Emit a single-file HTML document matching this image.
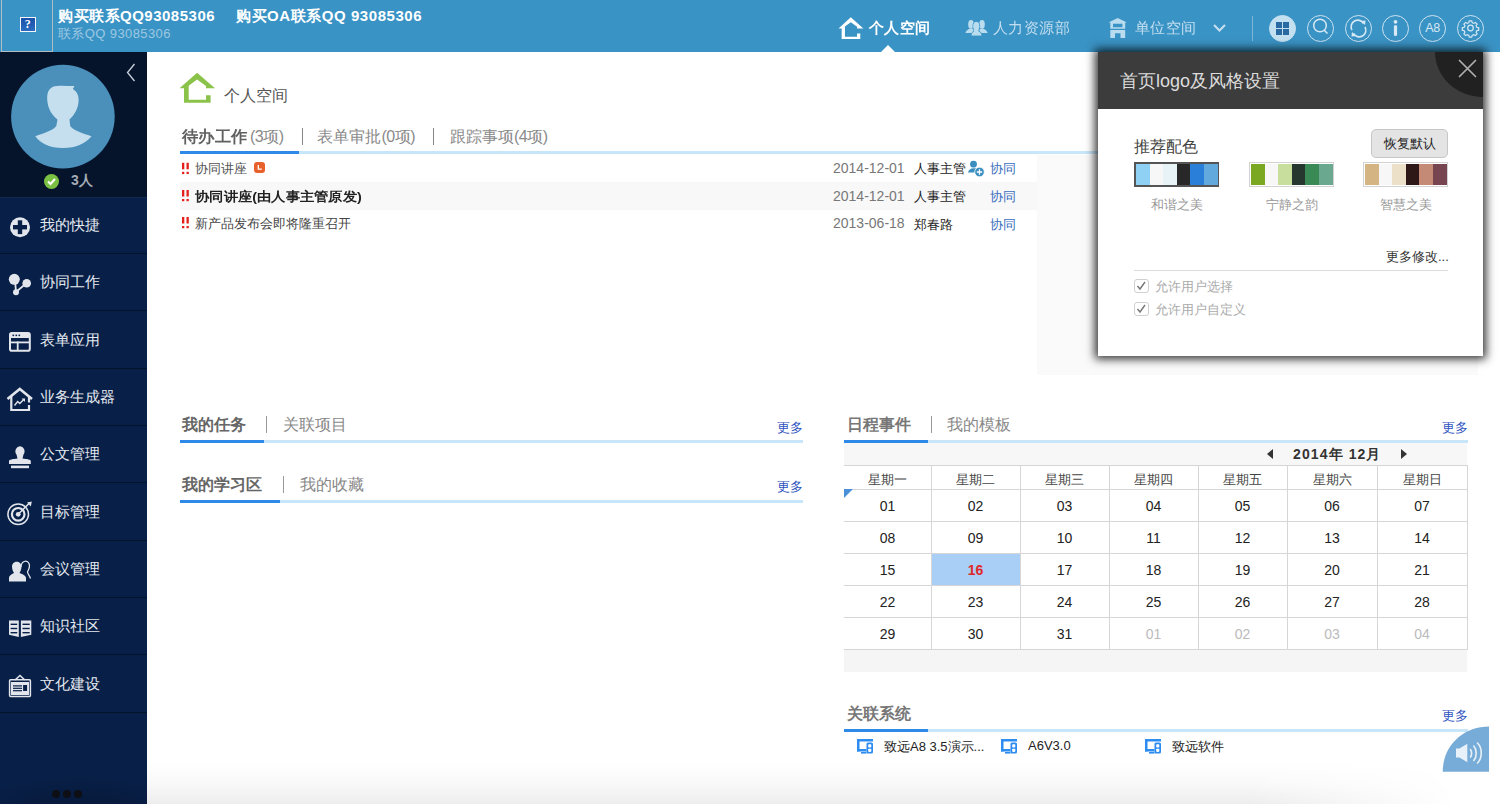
<!DOCTYPE html>
<html><head><meta charset="utf-8">
<style>
*{margin:0;padding:0;box-sizing:border-box}
html,body{width:1500px;height:804px;overflow:hidden;background:#fff;font-family:"Liberation Sans",sans-serif;position:relative}
.a{position:absolute;white-space:nowrap}
#hdr{left:0;top:0;width:1500px;height:52px;background:#3a93c5}
#side{left:0;top:52px;width:147px;height:752px;background:#081f47}
#sidetop{left:0;top:52px;width:147px;height:145px;background:#06142b}
.mi{left:0;width:147px;height:57px;border-bottom:1px solid #04152f;color:#e6ebf2;font-size:15px}
.mi span{position:absolute;left:40px;top:18px}
.mi svg{position:absolute;left:9px;top:18px}
.nav{color:#c3def0;font-size:15px;transform-origin:0 0;transform:scale(1.03)}
.ci{width:27px;height:27px;border:1px solid #cfe4f2;border-radius:50%}
</style></head><body>
<!-- HEADER -->
<div id="hdr" class="a"></div>
<div class="a" style="left:1px;top:-1px;width:52px;height:53px;border:1px solid #b1bcc4"></div>
<div class="a" style="left:20px;top:16.5px;width:15.5px;height:15.5px;background:linear-gradient(#1a4fa8,#2a6cc0);border:1.3px solid #f4f6fb;color:#fff;font-family:'Liberation Serif',serif;font-size:12px;font-weight:bold;text-align:center;line-height:13px">?</div>
<div class="a" style="left:58px;top:7px;color:#fff;font-size:15px;font-weight:bold;letter-spacing:0.5px">购买联系QQ93085306</div>
<div class="a" style="left:236px;top:7px;color:#fff;font-size:15px;font-weight:bold;letter-spacing:0.55px">购买OA联系QQ 93085306</div>
<div class="a" style="left:58px;top:25px;color:#9dc8e2;font-size:13px;letter-spacing:0.4px">联系QQ 93085306</div>

<!-- nav -->
<svg class="a" style="left:830px;top:10px" width="40" height="35" viewBox="830 10 40 35"><path d="M850.82 17.20 L863.35 28.40 L857.05 28.40 L857.05 26.80 L850.82 22.14 L844.94 26.58 L844.94 36.76 L857.05 36.76 L857.05 33.48 L860.27 33.48 L860.27 39.01 L841.65 39.01 L841.65 28.40 L838.50 28.40Z" fill="#fff"/></svg>
<div class="a" style="left:868.5px;top:19px;color:#fff;font-size:15px;font-weight:bold;transform-origin:0 0;transform:scale(1.03)">个人空间</div>
<div class="a" style="left:881px;top:45px;width:0;height:0;border-left:7px solid transparent;border-right:7px solid transparent;border-bottom:7px solid #fff"></div>
<svg class="a" style="left:960px;top:12px" width="30" height="28" viewBox="960 12 30 28"><ellipse cx="971" cy="24.4" rx="2.8" ry="4.4" fill="#b9dcee"/><path d="M965.4 33 C966 30.2 968.5 29.3 970.5 28.6 L973.5 29 V33Z" fill="#b9dcee"/><ellipse cx="982" cy="24.4" rx="2.8" ry="4.4" fill="#b9dcee"/><path d="M987.6 33 C987 30.2 984.5 29.3 982.5 28.6 L979.5 29 V33Z" fill="#b9dcee"/><g stroke="#3a93c5" stroke-width="0.9"><ellipse cx="976.3" cy="26.3" rx="3.3" ry="4.6" fill="#b9dcee"/><path d="M971 36 C971 32.6 973 31.3 975 30.9 L977.6 30.9 C979.6 31.3 982 32.6 982 36Z" fill="#b9dcee"/></g><ellipse cx="976.3" cy="26.3" rx="2.9" ry="4.2" fill="#b9dcee"/><path d="M974 30 h4.6 v2 h-4.6Z" fill="#b9dcee"/></svg>
<div class="a nav" style="left:993px;top:19px">人力资源部</div>
<svg class="a" style="left:1105px;top:15px" width="26" height="26" viewBox="1105 15 26 26"><path d="M1117.7 18 L1127 22.6 H1125.2 V28.7 H1110.3 V22.6 H1108.4Z M1113 23.8 V27.3 H1122.4 V23.8Z" fill="#b9dcee" fill-rule="evenodd"/><path d="M1110.3 30 H1125.2 V38 H1120.5 V33.3 H1115 V38 H1110.3Z" fill="#b9dcee"/></svg>
<div class="a nav" style="left:1134.5px;top:19px">单位空间</div>
<svg class="a" style="left:1213px;top:24px" width="13" height="8" viewBox="0 0 13 8"><path d="M1 1 L6.5 6.5 L12 1" fill="none" stroke="#c8dff0" stroke-width="2"/></svg>
<div class="a" style="left:1252px;top:16px;width:1px;height:25px;background:#7fb6d8"></div>

<div class="a ci" style="left:1269px;top:15px;background:#c3e0f1;border-color:#c3e0f1"></div>
<div class="a" style="left:1276px;top:22px;width:6px;height:6px;background:#2a6aa3"></div>
<div class="a" style="left:1283px;top:22px;width:6px;height:6px;background:#2a6aa3"></div>
<div class="a" style="left:1276px;top:29px;width:6px;height:6px;background:#2a6aa3"></div>
<div class="a" style="left:1283px;top:29px;width:6px;height:6px;background:#2a6aa3"></div>
<div class="a ci" style="left:1307px;top:15px"></div>
<svg class="a" style="left:1307px;top:15px" width="27" height="27" viewBox="0 0 27 27"><circle cx="13" cy="10.5" r="6.3" fill="none" stroke="#d6e8f4" stroke-width="1.5"/><path d="M17.2 15.2 L20.5 18.5" stroke="#d6e8f4" stroke-width="1.5"/></svg>
<div class="a ci" style="left:1345px;top:15px"></div>
<svg class="a" style="left:1345px;top:15px" width="27" height="27" viewBox="0 0 27 27"><path d="M7 15 A6.5 6.5 0 0 1 18.5 8.5" fill="none" stroke="#d6e8f4" stroke-width="1.6"/><path d="M20 12 A6.5 6.5 0 0 1 8.5 18.5" fill="none" stroke="#d6e8f4" stroke-width="1.6"/><path d="M16 6 L20.5 5.5 L20 10Z" fill="#d6e8f4"/><path d="M11 21 L6.5 21.5 L7 17Z" fill="#d6e8f4"/></svg>
<div class="a ci" style="left:1382px;top:15px"></div>
<svg class="a" style="left:1382px;top:15px" width="27" height="27" viewBox="0 0 27 27"><circle cx="13.5" cy="6.8" r="1.9" fill="#d6e8f4"/><rect x="11.9" y="10" width="3.2" height="11" rx="1.6" fill="#d6e8f4"/></svg>
<div class="a ci" style="left:1419px;top:15px"></div>
<div class="a" style="left:1419px;top:21px;width:27px;text-align:center;color:#d6e8f4;font-size:12.5px;letter-spacing:-0.5px">A8</div>
<div class="a ci" style="left:1457px;top:15px"></div>
<svg class="a" style="left:1457px;top:15px" width="27" height="27" viewBox="0 0 27 27"><g fill="none" stroke="#d6e8f4" stroke-width="1.2"><path d="M12.3 5.8 h2.4 l0.5 1.9 l1.5 0.7 l1.7 -1 l1.7 1.7 l-1 1.7 l0.7 1.5 l1.9 0.5 v2.4 l-1.9 0.5 l-0.7 1.5 l1 1.7 l-1.7 1.7 l-1.7 -1 l-1.5 0.7 l-0.5 1.9 h-2.4 l-0.5 -1.9 l-1.5 -0.7 l-1.7 1 l-1.7 -1.7 l1 -1.7 l-0.7 -1.5 l-1.9 -0.5 v-2.4 l1.9 -0.5 l0.7 -1.5 l-1 -1.7 l1.7 -1.7 l1.7 1 l1.5 -0.7Z"/><circle cx="13.5" cy="13" r="2.8"/></g></svg>

<!-- SIDEBAR -->
<div id="side" class="a"></div>
<div id="sidetop" class="a"></div>
<div class="a" style="left:0;top:196.5px;width:147px;height:1px;background:#132b52"></div>
<svg class="a" style="left:126px;top:63px" width="10" height="19" viewBox="0 0 10 19"><path d="M8.5 1 L1.5 9.5 L8.5 18" fill="none" stroke="#c9d3de" stroke-width="1.3"/></svg>
<svg class="a" style="left:0;top:52px" width="147" height="145" viewBox="0 52 147 145"><circle cx="62.9" cy="116.6" r="51.8" fill="#4a90bb"/><path d="M57.5 119.5 C51 114.5 47.5 107 47.2 99 C46.8 91 50 86.5 57 86 C63 85.3 68 86.2 74.5 86 L72.8 89 C77 91.5 79 96 78.6 101 C78.2 108 75 114.5 69.5 119.5 L70.2 126 C73 130.5 82 133 91.5 136.3 C86 143.5 76 148 63 148 C50 148 40 143.5 35.3 136.3 C44 133 53.5 130.5 56.3 126Z" fill="#c6dfee"/></svg>
<svg class="a" style="left:44px;top:174px" width="15" height="15" viewBox="0 0 15 15"><circle cx="7.5" cy="7.5" r="7.5" fill="#7ac143"/><path d="M4 7.5 L6.5 10 L11 5" fill="none" stroke="#fff" stroke-width="2"/></svg>
<div class="a" style="left:71px;top:172px;color:#a3abb5;font-size:14px;font-weight:bold">3人</div>

<div class="a" style="left:0;top:253.00px;width:147px;height:1px;background:#04132c"></div>
<div class="a" style="left:40px;top:216.00px;color:#e4e9f0;font-size:15px">我的快捷</div>
<div class="a" style="left:0;top:310.35px;width:147px;height:1px;background:#04132c"></div>
<div class="a" style="left:40px;top:273.35px;color:#e4e9f0;font-size:15px">协同工作</div>
<div class="a" style="left:0;top:367.70px;width:147px;height:1px;background:#04132c"></div>
<div class="a" style="left:40px;top:330.70px;color:#e4e9f0;font-size:15px">表单应用</div>
<div class="a" style="left:0;top:425.05px;width:147px;height:1px;background:#04132c"></div>
<div class="a" style="left:40px;top:388.05px;color:#e4e9f0;font-size:15px">业务生成器</div>
<div class="a" style="left:0;top:482.40px;width:147px;height:1px;background:#04132c"></div>
<div class="a" style="left:40px;top:445.40px;color:#e4e9f0;font-size:15px">公文管理</div>
<div class="a" style="left:0;top:539.75px;width:147px;height:1px;background:#04132c"></div>
<div class="a" style="left:40px;top:502.75px;color:#e4e9f0;font-size:15px">目标管理</div>
<div class="a" style="left:0;top:597.10px;width:147px;height:1px;background:#04132c"></div>
<div class="a" style="left:40px;top:560.10px;color:#e4e9f0;font-size:15px">会议管理</div>
<div class="a" style="left:0;top:654.45px;width:147px;height:1px;background:#04132c"></div>
<div class="a" style="left:40px;top:617.45px;color:#e4e9f0;font-size:15px">知识社区</div>
<div class="a" style="left:0;top:711.80px;width:147px;height:1px;background:#04132c"></div>
<div class="a" style="left:40px;top:674.80px;color:#e4e9f0;font-size:15px">文化建设</div>
<svg class="a" style="left:0;top:0" width="40" height="804" viewBox="0 0 40 804">
<circle cx="20" cy="227.2" r="10" fill="#e2e6ec"/><rect x="13" y="225" width="14" height="4.4" fill="#081f47"/><rect x="17.8" y="220.3" width="4.4" height="13.8" fill="#081f47"/>
<g transform="translate(0,0)"><path d="M15 280 L16 292 L26.7 283" fill="none" stroke="#e2e6ec" stroke-width="1.8"/><circle cx="14.3" cy="279.3" r="5.5" fill="#e2e6ec"/><circle cx="26.7" cy="283.3" r="4.3" fill="#e2e6ec"/><circle cx="16" cy="292.3" r="3" fill="#e2e6ec"/></g>
<rect x="10" y="333" width="19.8" height="17.7" rx="1.8" fill="none" stroke="#e2e6ec" stroke-width="2"/><rect x="10" y="333" width="19.8" height="5" fill="#e2e6ec"/><rect x="12.5" y="334.6" width="1.6" height="1.5" fill="#081f47"/><rect x="15.5" y="334.6" width="1.6" height="1.5" fill="#081f47"/><rect x="18.5" y="334.6" width="1.6" height="1.5" fill="#081f47"/><rect x="10" y="341.5" width="19.8" height="1.8" fill="#e2e6ec"/><rect x="16.8" y="341.5" width="1.8" height="9" fill="#e2e6ec"/>
<path d="M7.5 399 L19.8 389 L32 399" fill="none" stroke="#e2e6ec" stroke-width="2.6"/><path d="M11.3 396 V410 H29 V405 M29 402.5 V396" fill="none" stroke="#e2e6ec" stroke-width="2.2"/><path d="M14.5 405.5 L17.7 401.5 L19.8 403.5 L23.5 399.8" fill="none" stroke="#e2e6ec" stroke-width="1.4"/><path d="M21.5 398.5 L25 398.5 L25 402Z" fill="#e2e6ec"/>
<path d="M16.5 454.5 C14.5 452.5 15 447 20 446.3 C25 447 25.5 452.5 23.5 454.5 L22.5 458.5 C27 459 30.8 459.5 30.8 461 V464 H9 V461 C9 459.5 13 459 17.5 458.5Z" fill="#e2e6ec"/><rect x="11" y="465.6" width="18" height="2.6" fill="#e2e6ec"/>
<circle cx="18.2" cy="514.3" r="10.3" fill="none" stroke="#e2e6ec" stroke-width="1.5"/><circle cx="18.2" cy="514.3" r="6.3" fill="none" stroke="#e2e6ec" stroke-width="2.2"/><circle cx="18.2" cy="514.3" r="2.4" fill="#e2e6ec"/><path d="M18.2 514.3 L29.5 503" stroke="#e2e6ec" stroke-width="1.5"/><path d="M27 502.5 L31.8 501.6 L30.8 506.4Z" fill="#e2e6ec"/>
<path d="M21 567 C21 561 27 559.5 29 563.5 C30.5 566.5 28.5 570 27.5 572 C28 575 30 576 30.5 578.5" fill="none" stroke="#e2e6ec" stroke-width="1.3"/><path d="M12 566.5 C12 560 21.5 560 21.5 566.5 C21.5 570 20 572 19.5 573 C23 574.5 26 575.5 26 578 V581.4 H9 V578 C9 575.5 11.5 574.5 14 573 C13.5 572 12 570 12 566.5Z" fill="#e2e6ec"/>
<path d="M9 620.5 H18.8 V637 L9 634.8Z" fill="#e2e6ec"/><path d="M20.9 620.5 H31.3 V634.8 L20.9 637Z" fill="#e2e6ec"/><rect x="10.6" y="623.6" width="6.6" height="1.4" fill="#081f47"/><rect x="22.5" y="623.6" width="7.2" height="1.4" fill="#081f47"/><rect x="10.6" y="627.8" width="6.6" height="1.4" fill="#081f47"/><rect x="22.5" y="627.8" width="7.2" height="1.4" fill="#081f47"/><rect x="10.6" y="632" width="6.6" height="1.4" fill="#081f47"/><rect x="22.5" y="632" width="7.2" height="1.4" fill="#081f47"/>
<path d="M15 680 L20 675.5 L24.8 680" fill="none" stroke="#e2e6ec" stroke-width="1.6"/><rect x="9.6" y="679.8" width="20.8" height="16.6" rx="1" fill="none" stroke="#e2e6ec" stroke-width="1.5"/><rect x="11" y="682" width="18" height="13" fill="#e2e6ec"/><rect x="13" y="685.3" width="9" height="1.2" fill="#081f47"/><rect x="13" y="687.7" width="9" height="1.2" fill="#081f47"/><rect x="13" y="690.1" width="9" height="1.2" fill="#081f47"/><rect x="23.1" y="685" width="4" height="6" fill="#081f47"/>
</svg>
<div class="a" style="left:0;top:770px;width:147px;height:34px;background:radial-gradient(ellipse 110px 34px at 80px 40px,rgba(0,0,0,0.18) 0%,rgba(0,0,0,0.1) 55%,rgba(0,0,0,0) 100%)"></div>
<div class="a" style="left:51.7px;top:790px;width:8px;height:8px;border-radius:50%;background:#0e0f14"></div>
<div class="a" style="left:62.7px;top:790px;width:8px;height:8px;border-radius:50%;background:#0e0f14"></div>
<div class="a" style="left:73.7px;top:790px;width:8px;height:8px;border-radius:50%;background:#0e0f14"></div>


<!-- CONTENT -->
<svg class="a" style="left:175px;top:65px" width="50" height="45" viewBox="175 65 50 45"><path d="M197.1 72.8 L215 88.2 L206 88.2 L206 86 L197.1 79.6 L188.7 85.7 L188.7 99.7 L206 99.7 L206 95.2 L210.6 95.2 L210.6 102.8 L184 102.8 L184 88.2 L179.5 88.2 Z" fill="#8bc34a"/></svg>
<div class="a" style="left:224px;top:86px;color:#555;font-size:16px">个人空间</div>

<div class="a" style="left:181.5px;top:126.5px;font-size:16px;color:#606060;font-weight:bold;transform-origin:0 0;transform:scaleX(1.02)">待办工作</div>
<div class="a" style="left:250px;top:126.5px;font-size:16px;color:#8a8a8a;letter-spacing:-0.5px">(3项)</div>
<div class="a" style="left:302px;top:128px;width:1px;height:17px;background:#888"></div>
<div class="a" style="left:317px;top:126.5px;font-size:16px;color:#8a8a8a">表单审批</div>
<div class="a" style="left:381.5px;top:126.5px;font-size:16px;color:#8a8a8a;letter-spacing:-0.5px">(0项)</div>
<div class="a" style="left:433px;top:128px;width:1px;height:17px;background:#888"></div>
<div class="a" style="left:450px;top:126.5px;font-size:16px;color:#8a8a8a">跟踪事项</div>
<div class="a" style="left:514px;top:126.5px;font-size:16px;color:#8a8a8a;letter-spacing:-0.5px">(4项)</div>
<div class="a" style="left:180px;top:151px;width:920px;height:3px;background:#c8e6fa"></div>
<div class="a" style="left:180px;top:151px;width:119px;height:3px;background:#2e8ae6"></div>

<div class="a" style="left:1037px;top:155px;width:441px;height:220px;background:#fafafa"></div>
<div class="a" style="left:180px;top:182px;width:857px;height:28px;background:#f8f8f8"></div>

<svg class="a" style="left:178px;top:158px" width="14" height="75" viewBox="178 158 14 75"><rect x="182" y="162.8" width="2.3" height="6.5" fill="#e3201b"/><rect x="186.5" y="162.8" width="2.3" height="6.5" fill="#e3201b"/><rect x="182" y="171.8" width="2.3" height="2.2" fill="#e3201b"/><rect x="186.5" y="171.8" width="2.3" height="2.2" fill="#e3201b"/><rect x="182" y="190" width="2.3" height="6.5" fill="#e3201b"/><rect x="186.5" y="190" width="2.3" height="6.5" fill="#e3201b"/><rect x="182" y="199" width="2.3" height="2.2" fill="#e3201b"/><rect x="186.5" y="199" width="2.3" height="2.2" fill="#e3201b"/><rect x="182" y="217" width="2.3" height="6.5" fill="#e3201b"/><rect x="186.5" y="217" width="2.3" height="6.5" fill="#e3201b"/><rect x="182" y="226" width="2.3" height="2.2" fill="#e3201b"/><rect x="186.5" y="226" width="2.3" height="2.2" fill="#e3201b"/></svg>
<div class="a" style="left:195px;top:160px;color:#555;font-size:13px">协同讲座</div>
<div class="a" style="left:253.5px;top:162.3px;width:11px;height:11px;border-radius:3px;background:#e8612a"></div>
<svg class="a" style="left:253.5px;top:162.3px" width="11" height="11" viewBox="0 0 11 11"><path d="M4.3 3 V7.2 H7.8" fill="none" stroke="#fff" stroke-width="1.3"/></svg>
<div class="a" style="left:195px;top:188px;color:#222;font-size:13px;font-weight:bold;transform-origin:0 0;transform:scaleX(1.1)">协同讲座(由人事主管原发)</div>
<div class="a" style="left:195px;top:215px;color:#444;font-size:13px">新产品发布会即将隆重召开</div>

<div class="a" style="left:833px;top:159.5px;color:#777;font-size:14px">2014-12-01</div>
<div class="a" style="left:914px;top:160px;color:#222;font-size:13px">人事主管</div>
<svg class="a" style="left:966px;top:158px" width="20" height="20" viewBox="966 158 20 20"><circle cx="973.5" cy="164.2" r="3.4" fill="#3a8fc0"/><path d="M968 172.5 C968.5 169.8 970.5 168.5 973.5 168.3 L976.5 168.6 L975.5 172.5Z" fill="#3a8fc0"/><circle cx="979.5" cy="172" r="4.8" fill="#3a8fc0" stroke="#fff" stroke-width="0.8"/><path d="M976.8 172 H982.2 M979.5 169.3 V174.7" stroke="#fff" stroke-width="1.3"/></svg>
<div class="a" style="left:989.5px;top:160px;color:#3b6fc0;font-size:13px">协同</div>
<div class="a" style="left:833px;top:187.5px;color:#777;font-size:14px">2014-12-01</div>
<div class="a" style="left:914px;top:188px;color:#222;font-size:13px">人事主管</div>
<div class="a" style="left:989.5px;top:188px;color:#3b6fc0;font-size:13px">协同</div>
<div class="a" style="left:833px;top:215px;color:#777;font-size:14px">2013-06-18</div>
<div class="a" style="left:914px;top:215.5px;color:#222;font-size:13px">郑春路</div>
<div class="a" style="left:989.5px;top:215.5px;color:#3b6fc0;font-size:13px">协同</div>

<!-- tasks -->
<div class="a" style="left:182px;top:415px;font-size:16px;color:#666;font-weight:bold">我的任务</div>
<div class="a" style="left:266px;top:416px;width:1px;height:17px;background:#999"></div>
<div class="a" style="left:283px;top:415px;font-size:16px;color:#888">关联项目</div>
<div class="a" style="left:777px;top:419px;font-size:13px;color:#2d52c0">更多</div>
<div class="a" style="left:180px;top:440px;width:623px;height:3px;background:#c8e6fa"></div>
<div class="a" style="left:180px;top:440px;width:84px;height:3px;background:#2e8ae6"></div>

<div class="a" style="left:182px;top:475px;font-size:16px;color:#666;font-weight:bold">我的学习区</div>
<div class="a" style="left:283px;top:476px;width:1px;height:17px;background:#999"></div>
<div class="a" style="left:300px;top:475px;font-size:16px;color:#888">我的收藏</div>
<div class="a" style="left:777px;top:478px;font-size:13px;color:#2d52c0">更多</div>
<div class="a" style="left:180px;top:500px;width:623px;height:3px;background:#c8e6fa"></div>
<div class="a" style="left:180px;top:500px;width:100px;height:3px;background:#2e8ae6"></div>

<!-- schedule -->
<div class="a" style="left:847px;top:415px;font-size:16px;color:#777;font-weight:bold">日程事件</div>
<div class="a" style="left:931px;top:416px;width:1px;height:17px;background:#999"></div>
<div class="a" style="left:947px;top:415px;font-size:16px;color:#888">我的模板</div>
<div class="a" style="left:1442px;top:419px;font-size:13px;color:#2d52c0">更多</div>
<div class="a" style="left:844px;top:440px;width:624px;height:3px;background:#c8e6fa"></div>
<div class="a" style="left:844px;top:440px;width:84px;height:3px;background:#2e8ae6"></div>
<div class="a" style="left:844px;top:443px;width:623px;height:22px;background:#f7f7f7"></div>
<div class="a" style="left:1267px;top:449px;width:0;height:0;border-top:5px solid transparent;border-bottom:5px solid transparent;border-right:6px solid #333"></div>
<div class="a" style="left:1293px;top:445.5px;font-size:14px;color:#333;font-weight:bold;letter-spacing:1.1px">2014年 12月</div>
<div class="a" style="left:1401px;top:449px;width:0;height:0;border-top:5px solid transparent;border-bottom:5px solid transparent;border-left:6px solid #333"></div>
<div class="a" style="left:844px;top:649px;width:623px;height:23px;background:#f5f5f5"></div>
<div class="a" style="left:844px;top:465px;width:624px;height:185px;border:1px solid #d6d6d6;border-left:0;border-right:1px solid #d6d6d6"></div>
<div class="a" style="left:931px;top:465px;width:1px;height:184px;background:#d6d6d6"></div>
<div class="a" style="left:1020px;top:465px;width:1px;height:184px;background:#d6d6d6"></div>
<div class="a" style="left:1109px;top:465px;width:1px;height:184px;background:#d6d6d6"></div>
<div class="a" style="left:1198px;top:465px;width:1px;height:184px;background:#d6d6d6"></div>
<div class="a" style="left:1287px;top:465px;width:1px;height:184px;background:#d6d6d6"></div>
<div class="a" style="left:1377px;top:465px;width:1px;height:184px;background:#d6d6d6"></div>
<div class="a" style="left:844px;top:489px;width:623px;height:1px;background:#d6d6d6"></div>
<div class="a" style="left:844px;top:521px;width:623px;height:1px;background:#d6d6d6"></div>
<div class="a" style="left:844px;top:553px;width:623px;height:1px;background:#d6d6d6"></div>
<div class="a" style="left:844px;top:585px;width:623px;height:1px;background:#d6d6d6"></div>
<div class="a" style="left:844px;top:617px;width:623px;height:1px;background:#d6d6d6"></div>
<div class="a" style="left:932px;top:554px;width:88px;height:31px;background:#a9cff7"></div>
<div class="a" style="left:844px;top:489px;width:0;height:0;border-top:9px solid #4a90d9;border-right:9px solid transparent"></div>
<div class="a" style="left:844px;top:471px;width:87px;text-align:center;font-size:13px;color:#444">星期一</div>
<div class="a" style="left:931px;top:471px;width:89px;text-align:center;font-size:13px;color:#444">星期二</div>
<div class="a" style="left:1020px;top:471px;width:89px;text-align:center;font-size:13px;color:#444">星期三</div>
<div class="a" style="left:1109px;top:471px;width:89px;text-align:center;font-size:13px;color:#444">星期四</div>
<div class="a" style="left:1198px;top:471px;width:89px;text-align:center;font-size:13px;color:#444">星期五</div>
<div class="a" style="left:1287px;top:471px;width:90px;text-align:center;font-size:13px;color:#444">星期六</div>
<div class="a" style="left:1377px;top:471px;width:90px;text-align:center;font-size:13px;color:#444">星期日</div>
<div class="a" style="left:844px;top:498px;width:87px;text-align:center;font-size:14px;color:#222">01</div>
<div class="a" style="left:931px;top:498px;width:89px;text-align:center;font-size:14px;color:#222">02</div>
<div class="a" style="left:1020px;top:498px;width:89px;text-align:center;font-size:14px;color:#222">03</div>
<div class="a" style="left:1109px;top:498px;width:89px;text-align:center;font-size:14px;color:#222">04</div>
<div class="a" style="left:1198px;top:498px;width:89px;text-align:center;font-size:14px;color:#222">05</div>
<div class="a" style="left:1287px;top:498px;width:90px;text-align:center;font-size:14px;color:#222">06</div>
<div class="a" style="left:1377px;top:498px;width:90px;text-align:center;font-size:14px;color:#222">07</div>
<div class="a" style="left:844px;top:530px;width:87px;text-align:center;font-size:14px;color:#222">08</div>
<div class="a" style="left:931px;top:530px;width:89px;text-align:center;font-size:14px;color:#222">09</div>
<div class="a" style="left:1020px;top:530px;width:89px;text-align:center;font-size:14px;color:#222">10</div>
<div class="a" style="left:1109px;top:530px;width:89px;text-align:center;font-size:14px;color:#222">11</div>
<div class="a" style="left:1198px;top:530px;width:89px;text-align:center;font-size:14px;color:#222">12</div>
<div class="a" style="left:1287px;top:530px;width:90px;text-align:center;font-size:14px;color:#222">13</div>
<div class="a" style="left:1377px;top:530px;width:90px;text-align:center;font-size:14px;color:#222">14</div>
<div class="a" style="left:844px;top:562px;width:87px;text-align:center;font-size:14px;color:#222">15</div>
<div class="a" style="left:931px;top:562px;width:89px;text-align:center;font-size:14px;color:#e02828;font-weight:bold">16</div>
<div class="a" style="left:1020px;top:562px;width:89px;text-align:center;font-size:14px;color:#222">17</div>
<div class="a" style="left:1109px;top:562px;width:89px;text-align:center;font-size:14px;color:#222">18</div>
<div class="a" style="left:1198px;top:562px;width:89px;text-align:center;font-size:14px;color:#222">19</div>
<div class="a" style="left:1287px;top:562px;width:90px;text-align:center;font-size:14px;color:#222">20</div>
<div class="a" style="left:1377px;top:562px;width:90px;text-align:center;font-size:14px;color:#222">21</div>
<div class="a" style="left:844px;top:594px;width:87px;text-align:center;font-size:14px;color:#222">22</div>
<div class="a" style="left:931px;top:594px;width:89px;text-align:center;font-size:14px;color:#222">23</div>
<div class="a" style="left:1020px;top:594px;width:89px;text-align:center;font-size:14px;color:#222">24</div>
<div class="a" style="left:1109px;top:594px;width:89px;text-align:center;font-size:14px;color:#222">25</div>
<div class="a" style="left:1198px;top:594px;width:89px;text-align:center;font-size:14px;color:#222">26</div>
<div class="a" style="left:1287px;top:594px;width:90px;text-align:center;font-size:14px;color:#222">27</div>
<div class="a" style="left:1377px;top:594px;width:90px;text-align:center;font-size:14px;color:#222">28</div>
<div class="a" style="left:844px;top:626px;width:87px;text-align:center;font-size:14px;color:#222">29</div>
<div class="a" style="left:931px;top:626px;width:89px;text-align:center;font-size:14px;color:#222">30</div>
<div class="a" style="left:1020px;top:626px;width:89px;text-align:center;font-size:14px;color:#222">31</div>
<div class="a" style="left:1109px;top:626px;width:89px;text-align:center;font-size:14px;color:#bbb">01</div>
<div class="a" style="left:1198px;top:626px;width:89px;text-align:center;font-size:14px;color:#bbb">02</div>
<div class="a" style="left:1287px;top:626px;width:90px;text-align:center;font-size:14px;color:#bbb">03</div>
<div class="a" style="left:1377px;top:626px;width:90px;text-align:center;font-size:14px;color:#bbb">04</div>

<div class="a" style="left:147px;top:762px;width:1310px;height:42px;background:linear-gradient(to bottom,rgba(0,0,0,0) 0%,rgba(0,0,0,0.025) 50%,rgba(0,0,0,0.07) 100%);-webkit-mask-image:linear-gradient(to right,#000 0,#000 1100px,transparent 1310px);mask-image:linear-gradient(to right,#000 0,#000 1100px,transparent 1310px)"></div>
<!-- related systems -->
<div class="a" style="left:847px;top:704px;font-size:16px;color:#777;font-weight:bold">关联系统</div>
<div class="a" style="left:1442px;top:707px;font-size:13px;color:#2d52c0">更多</div>
<div class="a" style="left:844px;top:729px;width:624px;height:3px;background:#c8e6fa"></div>
<div class="a" style="left:844px;top:729px;width:84px;height:3px;background:#2e8ae6"></div>
<svg class="a" style="left:855px;top:736px" width="20" height="20" viewBox="855 736 20 20"><rect x="857" y="739" width="16" height="2.5" fill="#2d8cf0"/><rect x="857" y="739" width="2.5" height="12.5" fill="#2d8cf0"/><rect x="857" y="749" width="9.5" height="2.5" fill="#2d8cf0"/><rect x="861" y="752" width="5.5" height="1.6" fill="#2d8cf0"/><rect x="866.5" y="742.5" width="6.5" height="11" rx="1.5" fill="#2d8cf0"/><rect x="868.2" y="744.3" width="3.1" height="3.2" rx="0.8" fill="#fff"/><rect x="868.2" y="748.7" width="3.1" height="3.2" rx="0.8" fill="#fff"/></svg>
<svg class="a" style="left:999px;top:736px" width="20" height="20" viewBox="999 736 20 20"><rect x="1001" y="739" width="16" height="2.5" fill="#2d8cf0"/><rect x="1001" y="739" width="2.5" height="12.5" fill="#2d8cf0"/><rect x="1001" y="749" width="9.5" height="2.5" fill="#2d8cf0"/><rect x="1005" y="752" width="5.5" height="1.6" fill="#2d8cf0"/><rect x="1010.5" y="742.5" width="6.5" height="11" rx="1.5" fill="#2d8cf0"/><rect x="1012.2" y="744.3" width="3.1" height="3.2" rx="0.8" fill="#fff"/><rect x="1012.2" y="748.7" width="3.1" height="3.2" rx="0.8" fill="#fff"/></svg>
<svg class="a" style="left:1143px;top:736px" width="20" height="20" viewBox="1143 736 20 20"><rect x="1145" y="739" width="16" height="2.5" fill="#2d8cf0"/><rect x="1145" y="739" width="2.5" height="12.5" fill="#2d8cf0"/><rect x="1145" y="749" width="9.5" height="2.5" fill="#2d8cf0"/><rect x="1149" y="752" width="5.5" height="1.6" fill="#2d8cf0"/><rect x="1154.5" y="742.5" width="6.5" height="11" rx="1.5" fill="#2d8cf0"/><rect x="1156.2" y="744.3" width="3.1" height="3.2" rx="0.8" fill="#fff"/><rect x="1156.2" y="748.7" width="3.1" height="3.2" rx="0.8" fill="#fff"/></svg>
<div class="a" style="left:884px;top:737.5px;font-size:13px;color:#222">致远A8 3.5演示...</div>
<div class="a" style="left:1028px;top:737.5px;font-size:13px;color:#222">A6V3.0</div>
<div class="a" style="left:1172px;top:737.5px;font-size:13px;color:#222">致远软件</div>
<svg class="a" style="left:1440px;top:724px" width="52" height="52" viewBox="1440 724 52 52"><path d="M1442.7 771.7 C1442.7 746 1463 726.6 1489 726.6 V771.7Z" fill="#78acd8"/><path d="M1456 748.5 H1459.5 L1467.3 743.8 V762.2 L1459.5 757.5 H1456Z" fill="#e8f1f9"/><path d="M1470.5 749.5 C1472 751.5 1472 755 1470.5 757" fill="none" stroke="#e8f1f9" stroke-width="1.6" stroke-linecap="round"/><path d="M1473.8 746 C1477 749.5 1477 757 1473.8 760.5" fill="none" stroke="#e8f1f9" stroke-width="1.6" stroke-linecap="round"/><path d="M1477.5 743 C1482.5 748 1482.5 758 1477.5 763" fill="none" stroke="#e8f1f9" stroke-width="1.6" stroke-linecap="round"/></svg>

<!-- POPUP -->
<div class="a" style="left:1098px;top:52px;width:385px;height:304px;background:#fff;box-shadow:0 0 9px 3px rgba(0,0,0,0.8)"></div>
<div class="a" style="left:1098px;top:52px;width:385px;height:57px;background:#3c3c3c;overflow:hidden"><div style="position:absolute;left:337px;top:0;width:48px;height:45px;border-bottom-left-radius:48px 45px;background:#212121"></div></div>
<svg class="a" style="left:1458px;top:59px" width="19" height="19" viewBox="0 0 19 19"><path d="M1.5 1.5 L17.5 17.5 M17.5 1.5 L1.5 17.5" stroke="#b0b0b0" stroke-width="1.7" stroke-linecap="round"/></svg>
<div class="a" style="left:1120px;top:69px;color:#dcdcdc;font-size:18px">首页logo及风格设置</div>
<div class="a" style="left:1134px;top:136.5px;color:#444;font-size:16px">推荐配色</div>
<div class="a" style="left:1371px;top:129px;width:77px;height:29px;background:#e4e4e4;border:1px solid #c6c6c6;border-radius:5px;color:#222;font-size:13px;text-align:center;line-height:27px">恢复默认</div>
<div class="a" style="left:1134px;top:162px;width:85px;height:25px;background:#555"></div>
<div class="a" style="left:1136.00px;top:164px;width:14.00px;height:21px;background:#8fd0f5"></div>
<div class="a" style="left:1149.50px;top:164px;width:14.00px;height:21px;background:#f7f7f7"></div>
<div class="a" style="left:1163.00px;top:164px;width:14.00px;height:21px;background:#e8f3f8"></div>
<div class="a" style="left:1176.50px;top:164px;width:14.00px;height:21px;background:#282828"></div>
<div class="a" style="left:1190.00px;top:164px;width:14.00px;height:21px;background:#2a7fd8"></div>
<div class="a" style="left:1203.50px;top:164px;width:14.00px;height:21px;background:#62aadd"></div>
<div class="a" style="left:1249px;top:162px;width:85px;height:25px;background:#fff;border:1px solid #d2d2d2"></div>
<div class="a" style="left:1251.00px;top:164px;width:14.00px;height:21px;background:#7aa822"></div>
<div class="a" style="left:1264.50px;top:164px;width:14.00px;height:21px;background:#f7f7f7"></div>
<div class="a" style="left:1278.00px;top:164px;width:14.00px;height:21px;background:#c8de9c"></div>
<div class="a" style="left:1291.50px;top:164px;width:14.00px;height:21px;background:#25372e"></div>
<div class="a" style="left:1305.00px;top:164px;width:14.00px;height:21px;background:#3a8a56"></div>
<div class="a" style="left:1318.50px;top:164px;width:14.00px;height:21px;background:#6aa890"></div>
<div class="a" style="left:1363px;top:162px;width:85px;height:25px;background:#fff;border:1px solid #d2d2d2"></div>
<div class="a" style="left:1365.00px;top:164px;width:14.00px;height:21px;background:#d4b483"></div>
<div class="a" style="left:1378.50px;top:164px;width:14.00px;height:21px;background:#f7f7f7"></div>
<div class="a" style="left:1392.00px;top:164px;width:14.00px;height:21px;background:#ede0c8"></div>
<div class="a" style="left:1405.50px;top:164px;width:14.00px;height:21px;background:#2e1717"></div>
<div class="a" style="left:1419.00px;top:164px;width:14.00px;height:21px;background:#c48a75"></div>
<div class="a" style="left:1432.50px;top:164px;width:14.00px;height:21px;background:#774550"></div>
<div class="a" style="left:1134px;top:196px;width:85px;text-align:center;color:#999;font-size:13px">和谐之美</div>
<div class="a" style="left:1249px;top:196px;width:85px;text-align:center;color:#999;font-size:13px">宁静之韵</div>
<div class="a" style="left:1363px;top:196px;width:85px;text-align:center;color:#999;font-size:13px">智慧之美</div>
<div class="a" style="left:1386px;top:248px;color:#333;font-size:13px">更多修改...</div>
<div class="a" style="left:1134px;top:270px;width:314px;height:1px;background:#dcdcdc"></div>
<div class="a" style="left:1134px;top:279px;width:15px;height:14px;border:1px solid #d0d0d0;border-radius:3px"></div>
<svg class="a" style="left:1134px;top:279px" width="15" height="14" viewBox="0 0 15 14"><path d="M3.5 7 L6 10 L11 3" fill="none" stroke="#777" stroke-width="1.4"/></svg>
<div class="a" style="left:1155px;top:278px;color:#aaa;font-size:13px">允许用户选择</div>
<div class="a" style="left:1134px;top:302px;width:15px;height:14px;border:1px solid #d0d0d0;border-radius:3px"></div>
<svg class="a" style="left:1134px;top:302px" width="15" height="14" viewBox="0 0 15 14"><path d="M3.5 7 L6 10 L11 3" fill="none" stroke="#777" stroke-width="1.4"/></svg>
<div class="a" style="left:1155px;top:301px;color:#aaa;font-size:13px">允许用户自定义</div>

</body></html>
